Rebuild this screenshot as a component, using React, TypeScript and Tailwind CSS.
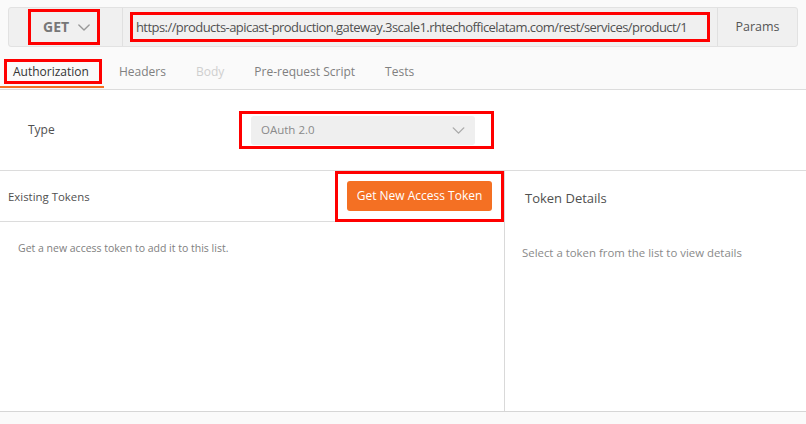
import React from "react";

const Chevron = ({ className }: { className?: string }) => (
  <svg className={className} viewBox="0 0 14 8" fill="none" stroke="currentColor" strokeWidth="1.6" strokeLinecap="round" strokeLinejoin="round">
    <path d="M1 1l6 6 6-6" />
  </svg>
);

export default function App() {
  return (
    <div
      className="w-[806px] h-[424px] bg-white overflow-hidden flex flex-col text-[#505050]"
      style={{ fontFamily: '"Open Sans", "Noto Sans", sans-serif' }}
    >
      {/* top area */}
      <div className="bg-[#fafafa] h-[90px] border-b border-[#dcdcdc] flex flex-col shrink-0">
        <div className="mt-[7px] mx-[8px] h-[40px] bg-[#f0f0f0] border border-[#e2e2e2] rounded-[3px] flex">
          <div className="w-[115px] border-r border-[#e0e0e0] flex items-center pl-[19px]">
            <div className="w-[72px] h-[36px] border-[3px] border-[#ff0000] flex items-center pl-[12px] gap-[9px]">
              <span className="text-[14px] font-bold text-[#777] leading-none">GET</span>
              <Chevron className="w-[12px] h-[7px] text-[#999]" />
            </div>
          </div>
          <div className="flex-1 flex items-center pl-[7px] pr-[7px] border-r border-[#e0e0e0]">
            <div className="w-[580px] h-[30px] border-[3px] border-[#ff0000] flex items-center pl-[3px] overflow-hidden">
              <span className="text-[13px] tracking-[-0.55px] text-[#505050] whitespace-nowrap leading-none">
                https://products-apicast-production.gateway.3scale1.rhtechofficelatam.com/rest/services/product/1
              </span>
            </div>
          </div>
          <div className="w-[80px] flex items-center justify-center text-[12.5px] text-[#555]">Params</div>
        </div>
        <div className="flex-1 flex items-end text-[12px]">
          <div className="relative w-[104px] h-[41px] flex items-center pl-[13px]">
            <div className="absolute left-[4px] top-[11px] w-[98px] h-[25px] border-[3px] border-[#ff0000]" />
            <span className="text-[#333] mt-[6px]">Authorization</span>
            <div className="absolute left-0 right-0 bottom-[1px] h-[2px] bg-[#f47023]" />
          </div>
          <div className="h-[41px] flex items-center gap-[30px] pl-[15px] text-[#808080]">
            <span className="mt-[6px]">Headers</span>
            <span className="mt-[6px] text-[#cfcfcf]">Body</span>
            <span className="mt-[6px]">Pre-request Script</span>
            <span className="mt-[6px]">Tests</span>
          </div>
        </div>
      </div>

      {/* type row */}
      <div className="h-[81px] flex items-center border-b border-[#dcdcdc] shrink-0">
        <span className="pl-[28px] w-[239px] text-[12px] text-[#505050]">Type</span>
        <div className="w-[255px] h-[38px] border-[3px] border-[#ff0000] flex items-center pl-[9px]">
          <div className="w-[224px] h-[29px] bg-[#efefef] rounded-[3px] flex items-center justify-between pl-[10px] pr-[10px]">
            <span className="text-[11.5px] text-[#8a8a8a]">OAuth 2.0</span>
            <Chevron className="w-[13px] h-[7px] text-[#aaa]" />
          </div>
        </div>
      </div>

      {/* tokens area */}
      <div className="h-[241px] flex border-b border-[#d6d6d6] shrink-0">
        <div className="w-[505px] border-r border-[#d9d9d9] flex flex-col">
          <div className="h-[51px] border-b border-[#dcdcdc] flex items-center justify-between">
            <span className="pl-[8px] text-[11.4px] text-[#505050] mt-[2px]">Existing Tokens</span>
            <div className="w-[169px] h-[51px] border-[3px] border-[#ff0000] flex items-center pl-[9px]">
              <button className="w-[145px] h-[30px] bg-[#f47023] rounded-[3px] text-white text-[12px]">
                Get New Access Token
              </button>
            </div>
          </div>
          <div className="pl-[18px] pt-[19px] text-[10.5px] text-[#808080]">
            Get a new access token to add it to this list.
          </div>
        </div>
        <div className="flex-1 flex flex-col">
          <div className="pl-[20px] pt-[18px] text-[13px] text-[#505050]">Token Details</div>
          <div className="pl-[17px] pt-[35px] text-[11.4px] text-[#8a8a8a]">
            Select a token from the list to view details
          </div>
        </div>
      </div>
      <div className="flex-1 bg-[#fafafa]" />
    </div>
  );
}
